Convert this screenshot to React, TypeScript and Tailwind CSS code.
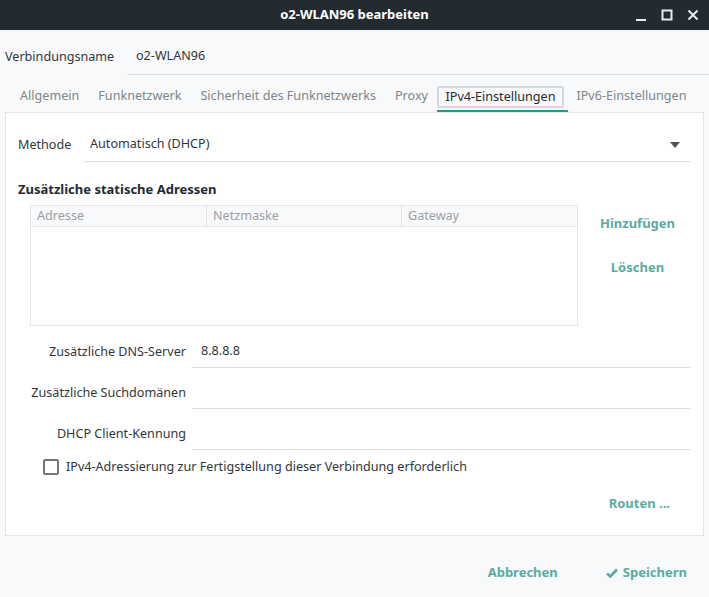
import React from 'react';

const font = { fontFamily: '"Noto Sans", "Open Sans", sans-serif' };

function Field({ label, value }: { label: string; value?: string }) {
  return (
    <div className="flex items-end h-[41px]">
      <div className="w-[180px] text-right pb-[6px]">{label}</div>
      <div className="ml-[6px] flex-1 border-b border-[#dcdfe1] h-full flex items-end pb-[6px] pl-[9px]">
        {value}
      </div>
    </div>
  );
}

export default function App() {
  return (
    <div className="w-[709px] h-[597px] bg-[#f8f9fa] text-[12.6px] text-[#31363b] flex flex-col overflow-hidden" style={font}>
      {/* title bar */}
      <div className="h-[30px] bg-[#232b30] flex items-center relative shrink-0">
        <div className="flex-1 text-center text-white font-bold text-[13px]">o2-WLAN96 bearbeiten</div>
        <div className="absolute right-[10px] top-0 h-full flex items-center gap-[14px] text-white">
          <svg width="12" height="12" viewBox="0 0 12 12"><rect x="1" y="10" width="10" height="2" fill="#e8eaec" /></svg>
          <svg width="12" height="12" viewBox="0 0 12 12"><rect x="1.5" y="1.5" width="9" height="9" fill="none" stroke="#e8eaec" strokeWidth="2" /></svg>
          <svg width="12" height="12" viewBox="0 0 12 12"><path d="M1.5 1.5 L10.5 10.5 M10.5 1.5 L1.5 10.5" stroke="#e8eaec" strokeWidth="2" /></svg>
        </div>
      </div>

      {/* connection name */}
      <div className="flex items-end h-[45px] pl-[5px] shrink-0">
        <div className="pb-[8px] w-[122px]">Verbindungsname</div>
        <div className="flex-1 border-b border-[#dcdfe1] h-full flex items-end pb-[8px] pl-[9px]">o2-WLAN96</div>
      </div>

      {/* tabs */}
      <div className="flex items-end h-[37px] pl-[10.5px] text-[#7f8689] shrink-0">
        {['Allgemein', 'Funknetzwerk', 'Sicherheit des Funknetzwerks', 'Proxy'].map((t) => (
          <div key={t} className="px-[9.5px] pb-[6px]">{t}</div>
        ))}
        <div className="border-b-2 border-[#16a085] pb-[2px] ml-[-1px]">
          <div className="h-[22px] flex items-center border-2 border-[#d5d8da] rounded-[2px] text-[#232b30] px-[7px] mr-[4px]">IPv4-Einstellungen</div>
        </div>
        <div className="px-[8px] pb-[6px]">IPv6-Einstellungen</div>
      </div>

      {/* panel */}
      <div className="mx-[5px] w-[699px] h-[424px] bg-white border border-[#e3e5e7] flex flex-col shrink-0">
        <div className="flex items-end h-[49px] pl-[12px] pr-[12px]">
          <div className="w-[66px] pb-[7px]">Methode</div>
          <div className="flex-1 border-b border-[#dcdfe1] h-full flex items-end pb-[7px] pl-[6px] justify-between">
            <span>Automatisch (DHCP)</span>
            <svg width="10" height="6" viewBox="0 0 10 6" className="mr-[11px] mb-[6px]"><path d="M0 0 L10 0 L5 6 Z" fill="#4d5357" /></svg>
          </div>
        </div>

        <div className="pl-[12px] pt-[18px] font-bold text-[13px] text-[#232b30]">Zusätzliche statische Adressen</div>

        <div className="flex mt-[5px]">
          <div className="ml-[24px] w-[548px] h-[121px] border border-[#e3e5e7] flex flex-col">
            <div className="flex h-[21px] bg-[#f8f9fa] border-b border-[#e3e5e7] text-[#9aa0a4]">
              <div className="w-[175px] pl-[6px] leading-[20px]">Adresse</div>
              <div className="w-[195px] pl-[6px] leading-[20px] border-l border-[#e3e5e7]">Netzmaske</div>
              <div className="flex-1 pl-[6px] leading-[20px] border-l border-[#e3e5e7]">Gateway</div>
            </div>
          </div>
          <div className="flex-1 flex flex-col items-center font-bold text-[13px] text-[#5aaca2] pt-[9px] gap-[25px] pr-[6px]">
            <div>Hinzufügen</div>
            <div>Löschen</div>
          </div>
        </div>

        <div className="pr-[12px] mt-[1px]">
          <Field label="Zusätzliche DNS-Server" value="8.8.8.8" />
          <Field label="Zusätzliche Suchdomänen" />
          <Field label="DHCP Client-Kennung" />
        </div>

        <div className="flex items-center pl-[37px] mt-[8px]">
          <div className="w-[16px] h-[16px] border-2 border-[#71777b] rounded-[2px]" />
          <div className="ml-[7px]">IPv4-Adressierung zur Fertigstellung dieser Verbindung erforderlich</div>
        </div>

        <div className="flex justify-end pr-[33px] mt-[18px] font-bold text-[13px] text-[#5aaca2]">Routen ...</div>
      </div>

      {/* footer */}
      <div className="flex justify-end items-center flex-1 pt-[12px] pr-[22px] font-bold text-[#5aaca2] text-[13px] gap-[48px]">
        <div>Abbrechen</div>
        <div className="flex items-center gap-[5px]">
          <svg width="12" height="10" viewBox="0 0 12 10"><path d="M1 5.5 L4.3 8.5 L11 1.5" fill="none" stroke="#5aaca2" strokeWidth="2.6" /></svg>
          <span>Speichern</span>
        </div>
      </div>
    </div>
  );
}
